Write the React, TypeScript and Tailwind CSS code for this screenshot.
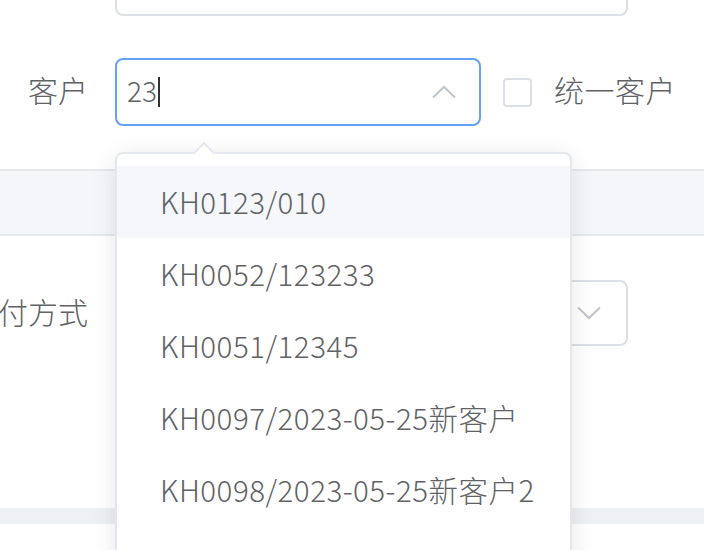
import React from "react";

const font = { fontFamily: '"Noto Sans CJK SC", "Noto Sans", sans-serif' };

export default function App() {
  const options = [
    "KH0123/010",
    "KH0052/123233",
    "KH0051/12345",
    "KH0097/2023-05-25新客户",
    "KH0098/2023-05-25新客户2",
    "",
  ];
  return (
    <div className="relative w-[704px] h-[550px] overflow-hidden bg-white text-[#606266] font-light" style={font}>
      {/* top input (cut off) */}
      <div className="flex">
        <div className="w-[115px] shrink-0" />
        <div className="mt-[-52px] h-[68px] w-[513px] rounded-[8px] border-2 border-[#dcdfe6]" />
      </div>

      {/* customer row */}
      <div className="mt-[42px] flex items-center h-[68px]">
        <div className="w-[115px] shrink-0 flex justify-end pr-[27px] pb-[7px] text-[30px] leading-none whitespace-nowrap">客户</div>
        <div className="w-[366px] h-[68px] rounded-[8px] border-2 border-[#62a2fa] flex items-center pl-[10px] pr-[22px]">
          <span className="text-[28px] leading-none text-[#606266] pb-[4px]">23</span>
          <span className="ml-[1px] w-[2px] h-[30px] bg-[#303133]" />
          <div className="flex-1" />
          <svg width="26" height="14" viewBox="0 0 26 14" fill="none">
            <path d="M2 12.5 L13 2 L24 12.5" stroke="#c0c4cc" strokeWidth="2" />
          </svg>
        </div>
        <div className="ml-[22px] w-[29px] h-[29px] rounded-[4px] border-2 border-[#dcdfe6] bg-white" />
        <div className="ml-[22px] pb-[7px] text-[30px] leading-none whitespace-nowrap tracking-[0.5px]">统一客户</div>
      </div>

      {/* gray section band */}
      <div className="mt-[43px] h-[67px] bg-[#f5f6f9] border-y-2 border-[#e6e8ec]" />

      {/* payment row */}
      <div className="mt-[44px] flex items-center h-[66px]">
        <div className="w-[115px] shrink-0 flex justify-end pr-[27px] pb-[5px] text-[30px] leading-none whitespace-nowrap">支付方式</div>
        <div className="w-[513px] h-[66px] rounded-[8px] border-2 border-[#dcdfe6] flex items-center justify-end pr-[24px]">
          <svg width="26" height="14" viewBox="0 0 26 14" fill="none">
            <path d="M2 1.5 L13 12 L24 1.5" stroke="#c0c4cc" strokeWidth="2" />
          </svg>
        </div>
      </div>

      {/* bottom band */}
      <div className="mt-[162px] h-[16px] bg-[#eff0f3]" />

      {/* dropdown */}
      <div className="absolute left-[115px] top-[152px] w-[457px] h-[420px] rounded-[8px] border-2 border-[#e4e7ed] bg-white shadow-[0_4px_24px_rgba(0,0,0,0.1)]">
        <div className="absolute left-[79px] top-[-9px] w-[16px] h-[16px] rotate-45 bg-white border-l-2 border-t-2 border-[#e4e7ed]" />
        <div className="relative pt-[12px]">
          {options.map((o, i) => (
            <div
              key={i}
              className={
                i === 0
                  ? "h-[72px] flex items-center pl-[43px] text-[29.5px] leading-none tracking-[0.5px] bg-[#f5f7fa] whitespace-nowrap"
                  : "h-[72px] flex items-center pl-[43px] text-[29.5px] leading-none tracking-[0.5px] whitespace-nowrap"
              }
            >
              {o}
            </div>
          ))}
        </div>
      </div>
    </div>
  );
}
